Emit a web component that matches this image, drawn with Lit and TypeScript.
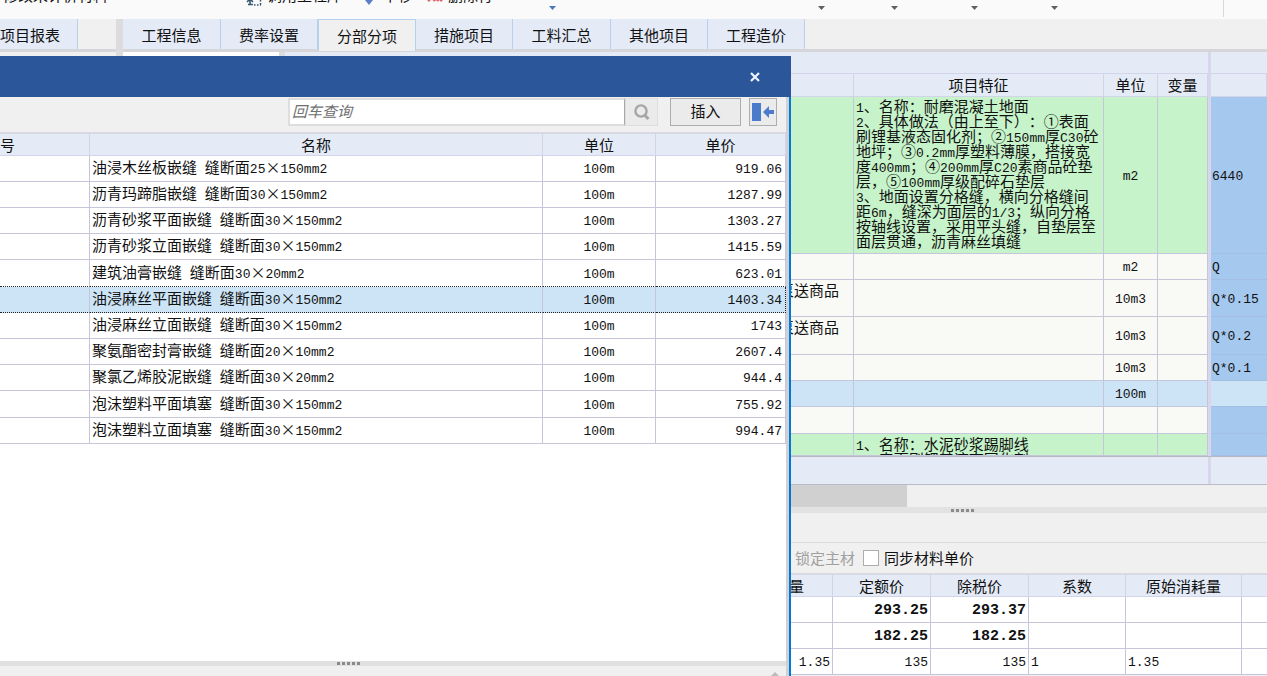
import { LitElement, html, css } from "lit";
import { customElement, property, state } from "lit/decorators.js";
import { classMap } from "lit/directives/class-map.js";

const base = css`
  * { box-sizing: border-box; }
  :host {
    font-family: "Noto Sans CJK SC", "Liberation Sans", sans-serif;
    font-size: 15px;
    line-height: 20px;
    color: #111;
    text-spacing-trim: space-all;
  }
  .latin { font-family: "Liberation Mono", monospace; font-size: 13px; }
  button, input { font: inherit; color: inherit; }
  table { border-collapse: separate; border-spacing: 0; table-layout: fixed; width: 100%; }
  th, td { padding: 0; font-weight: 400; white-space: nowrap; overflow: hidden;
    border-right: 1px solid #c6c6da; border-bottom: 1px solid #c6c6da; }
  th { background: #e4ebf7; border-color: #d2d5ea; }
  .grip { display: flex; gap: 2px; }
  .grip i { width: 3px; height: 3px; background: #8a8a8a; }
`;

/* Half-width runs are set in the monospaced face, the rest in the CJK face. */
const mixed = (s: string) =>
  s.split(/([\x20-\x7e]+)/).map((part, i) => (i % 2 ? html`<span class="latin">${part}</span>` : part));

const grip = html`<span class="grip"><i></i><i></i><i></i><i></i><i></i></span>`;

@customElement("tool-strip")
class ToolStrip extends LitElement {
  static styles = [base, css`
    :host { display: block; height: 19px; background: #fafafa; overflow: hidden; position: relative; }
    .strip { display: flex; margin-top: -13px; height: 20px; padding-left: 3px; }
    button { border: 0; background: none; padding: 0; display: flex; gap: 5px; line-height: 16px; height: 16px; white-space: nowrap; }
    .call { margin-left: 138px; }
    .down { margin-left: 20px; }
    .remove { margin-left: 14px; }
    svg { flex: none; width: 16px; height: 20px; }
    .mark { position: absolute; top: 6px; width: 7px; height: 4px; background: #606060; clip-path: polygon(0 0, 100% 0, 50% 100%); }
    .blue { background: #4a78b8; }
    .rule { position: absolute; right: 43px; top: 0; width: 1px; height: 17px; background: #d8d8d8; }
  `];
  render() {
    return html`
      <div class="strip">
        <button>修改未计价材料</button>
        <button class="call">
          <svg viewBox="0 0 16 20"><path d="M4 11v6M1 15l3-3 3 3M2 17.500h5" stroke="#34566f" stroke-width="1.600" fill="none"/><path d="M8 18h7M14.500 10v8" stroke="#34566f" stroke-width="1.500" stroke-dasharray="1.500 1.500" fill="none"/></svg>
          调用工程库
        </button>
        <button class="down">
          <svg viewBox="0 0 16 20"><path d="M7 18l4-5H3z" fill="#5b7fc6"/></svg>下移
        </button>
        <button class="remove">
          <svg viewBox="0 0 16 20"><path d="M1 14l4-4M5 10l3 4M10 14l3-4M12 11l3 3" stroke="#e0606a" stroke-width="2.600" fill="none"/></svg>删除行
        </button>
      </div>
      ${[549, 818, 891, 971, 1051].map((x, i) => html`<span class=${classMap({ mark: true, blue: i === 0 })} style="left:${x}px"></span>`)}
      <span class="rule"></span>
    `;
  }
}

@customElement("bill-grid")
class BillGrid extends LitElement {
  static styles = [base, css`
    :host { display: block; background: #e4ebf7; }
    .name { width: auto; }
    .feature { width: 250px; }
    .unit { width: 54px; }
    .variable { width: 50px; }
    .split { width: 3px; }
    .qty { width: 56px; }
    thead .group th { height: 22px; border-right: 0; }
    thead .heads th { height: 23px; line-height: 20px; }
    th.gap, td.gap { background: #d8d6ea; border: 0; }
    td { background: #f9faf6; text-align: center; vertical-align: middle; }
    .green td { background: #c6f3c9; }
    .chosen td { background: #cce4f6; }
    td.value { background: #a5c8ef; border-right: 0; border-bottom-color: #a3bfe4; text-align: left; padding-left: 1px; }
    .chosen td.value { background: #cce4f6; }
    td.title { text-align: right; padding-right: 14px; vertical-align: top; }
    td.text { text-align: left; padding-left: 2px; }
    .line { height: 15px; line-height: 15px; }
    .lines { padding-bottom: 4px; }
    .cut { height: 21px; padding-top: 2px; overflow: hidden; }
    tr.green td.gap, tr td.gap, tr.chosen td.gap { background: #d8d6ea; }
    .h156 { height: 157px; } .h26 { height: 26px; } .h27 { height: 27px; }
    .h37 { height: 37px; } .h38 { height: 38px; } .h22 { height: 22px; }
    .foot { display: flex; height: 29px; border-top: 1px solid #b8b8c0; border-bottom: 1px solid #b8bcc4; justify-content: flex-end; padding-right: 56px; }
    .foot i { width: 3px; background: #d8d6ea; }
    .scroll { height: 22px; background: #f0f0f0; }
    .thumb { height: 22px; width: 63.3%; background: #d0d0d0; }
  `];
  features = [
    "1、名称：耐磨混凝土地面",
    "2、具体做法（由上至下）：①表面",
    "刷锂基液态固化剂；②150mm厚C30砼",
    "地坪；③0.2mm厚塑料薄膜，搭接宽",
    "度400mm；④200mm厚C20素商品砼垫",
    "层，⑤100mm厚级配碎石垫层",
    "3、地面设置分格缝，横向分格缝间",
    "距6m，缝深为面层的1/3；纵向分格",
    "按轴线设置，采用平头缝，自垫层至",
    "面层贯通，沥青麻丝填缝",
  ];
  rows = [
    { h: "h156 green", text: this.features, unit: "m2", qty: "6440" },
    { h: "h26", unit: "m2", qty: "Q" },
    { h: "h37", title: "泵送商品", unit: "10m3", qty: "Q*0.15" },
    { h: "h38", title: "泵送商品", unit: "10m3", qty: "Q*0.2" },
    { h: "h26", unit: "10m3", qty: "Q*0.1" },
    { h: "h26 chosen", unit: "100m", qty: "" },
    { h: "h27", unit: "", qty: "" },
    { h: "h22 green", text: ["1、名称：水泥砂浆踢脚线", "2、表面刷锂基液态固化剂"], cut: true, unit: "", qty: "" },
  ] as { h: string; text?: string[]; title?: string; cut?: boolean; unit: string; qty: string }[];
  render() {
    return html`
      <table>
        <colgroup><col class="name"><col class="feature"><col class="unit"><col class="variable"><col class="split"><col class="qty"></colgroup>
        <thead>
          <tr class="group"><th colspan="4"></th><th class="gap"></th><th></th></tr>
          <tr class="heads"><th></th><th>项目特征</th><th>单位</th><th>变量</th><th class="gap"></th><th></th></tr>
        </thead>
        <tbody>
          ${this.rows.map((r) => html`<tr class=${r.h}>
            <td class="title">${r.title ?? ""}</td>
            <td class="text">${r.text ? html`<div class=${r.cut ? "cut" : "lines"}>${r.text.map((l) => html`<div class="line">${mixed(l)}</div>`)}</div>` : ""}</td>
            <td>${mixed(r.unit)}</td><td></td><td class="gap"></td>
            <td class="value">${mixed(r.qty)}</td>
          </tr>`)}
        </tbody>
      </table>
      <div class="foot"><i></i></div>
      <div class="scroll"><div class="thumb"></div></div>
    `;
  }
}

@customElement("material-panel")
class MaterialPanel extends LitElement {
  static styles = [base, css`
    :host { display: block; background: #f0f0f0; }
    .splitter { height: 6px; background: #e2e2e2; display: flex; justify-content: flex-end; padding: 2px 293px 0 0; }
    .blank { height: 30px; border-bottom: 1px solid #dcdcdc; }
    .options { height: 32px; display: flex; align-items: center; justify-content: flex-end; gap: 8px; padding-right: 293px; border-bottom: 2px solid #d8d9e2; }
    label { display: flex; align-items: center; gap: 5px; }
    .off { color: #a0a0a0; }
    input { appearance: none; width: 16px; height: 16px; margin: 0; border: 1px solid #adadad; background: #fff; }
    .used { width: auto; }
    .price { width: 98px; }
    .ratio { width: 97px; }
    .origin { width: 116px; }
    .rest { width: 25px; }
    th { height: 22px; line-height: 20px; }
    th.lead { text-align: right; padding-right: 28px; }
    th:last-child, td:last-child { border-right: 0; }
    td { height: 26px; background: #fff; padding: 0 2px; }
    .num { text-align: right; }
    .strong .latin { font-weight: 700; font-size: 15px; }
  `];
  render() {
    const rows = [
      ["", "293.25", "293.37", "", ""],
      ["", "182.25", "182.25", "", ""],
      ["1.35", "135", "135", "1", "1.35"],
    ];
    return html`
      <div class="splitter">${grip}</div>
      <div class="blank"></div>
      <div class="options">
        <label class="off"><input type="checkbox" disabled>锁定主材</label>
        <label><input type="checkbox">同步材料单价</label>
      </div>
      <table>
        <colgroup><col class="used"><col class="price"><col class="price"><col class="ratio"><col class="origin"><col class="rest"></colgroup>
        <thead><tr><th class="lead">消耗量</th><th>定额价</th><th>除税价</th><th>系数</th><th>原始消耗量</th><th></th></tr></thead>
        <tbody>
          ${rows.map((r, i) => html`<tr class=${classMap({ strong: i < 2 })}>
            ${r.map((c, j) => html`<td class=${classMap({ num: j < 3 })}>${mixed(c)}</td>`)}<td></td>
          </tr>`)}
        </tbody>
      </table>
    `;
  }
}

@customElement("quota-dialog")
class QuotaDialog extends LitElement {
  static styles = [base, css`
    :host { display: flex; flex-direction: column; background: #f0f0f0; }
    .bar { flex: none; height: 41px; background: #2b579a; display: flex; align-items: center; justify-content: flex-end; padding-right: 29px; }
    .bar button { border: 0; background: none; padding: 0; width: 14px; height: 14px; display: flex; align-items: center; justify-content: center; }
    .body { flex: 1; min-height: 0; display: flex; flex-direction: column; border-right: 2px solid #0078d7; }
    .inner { flex: 1; min-height: 0; display: flex; flex-direction: column; border-right: 3px solid #cfd1d6; }
    .tools { height: 37px; flex: none; display: flex; padding: 1px 9px 0 288px; border-bottom: 2px solid #d8d9e2; }
    .tools input { flex: 1; min-width: 0; height: 28px; border: 2px solid #dedede; border-right: 1px solid #a8a8a8; padding: 0 2px 4px; background: #fff; outline: 0; }
    .tools input::placeholder { font-style: italic; color: #707070; opacity: 1; }
    .tools button { height: 28px; border: 1px solid #adadad; background: #ebebeb; padding: 0 0 2px; display: flex; align-items: center; justify-content: center; }
    .tools .find { width: 33px; border-color: #dedede; padding: 0; }
    .tools .insert { width: 71px; margin-left: 12px; }
    .tools .dock { width: 28px; margin-left: 8px; padding: 0; }
    .list { flex: 1; min-height: 0; background: #fff; }
    .code { width: 90px; } .label { width: auto; } .unit { width: 113px; } .cost { width: 130px; }
    th { height: 22px; line-height: 20px; }
    th.first { text-align: left; }
    td { height: 26px; background: #fff; }
    tr:nth-child(5n) td { height: 27px; }
    td.left { padding-left: 2px; }
    td.mid { text-align: center; }
    td.right { text-align: right; padding-right: 3px; }
    .chosen td { background: #cce4f6; border-bottom: 1px dotted #222; }
    .before td { border-bottom: 1px dotted #222; }
    .chosen td.right { border-right: 1px dotted #222; }
    .splitter { flex: none; height: 5px; background: #e0e0e0; display: flex; padding: 1px 0 0 337px; }
    .tail { flex: none; height: 10px; display: flex; justify-content: flex-end; align-items: flex-end; padding-right: 7px; }
  `];
  @state() chosen = 5;
  items = [
    ["油浸木丝板嵌缝 缝断面25×150mm2", "919.06"],
    ["沥青玛蹄脂嵌缝 缝断面30×150mm2", "1287.99"],
    ["沥青砂浆平面嵌缝 缝断面30×150mm2", "1303.27"],
    ["沥青砂浆立面嵌缝 缝断面30×150mm2", "1415.59"],
    ["建筑油膏嵌缝 缝断面30×20mm2", "623.01"],
    ["油浸麻丝平面嵌缝 缝断面30×150mm2", "1403.34"],
    ["油浸麻丝立面嵌缝 缝断面30×150mm2", "1743"],
    ["聚氨酯密封膏嵌缝 缝断面20×10mm2", "2607.4"],
    ["聚氯乙烯胶泥嵌缝 缝断面30×20mm2", "944.4"],
    ["泡沫塑料平面填塞 缝断面30×150mm2", "755.92"],
    ["泡沫塑料立面填塞 缝断面30×150mm2", "994.47"],
  ];
  render() {
    return html`
      <div class="bar">
        <button aria-label="关闭"><svg width="12" height="10" viewBox="0 0 12 10"><path d="M2 1l8 8M10 1L2 9" stroke="#eef3fa" stroke-width="2.2"/></svg></button>
      </div>
      <div class="body"><div class="inner">
        <div class="tools">
          <input type="text" placeholder="回车查询" aria-label="回车查询">
          <button class="find" aria-label="查询"><svg width="18" height="18" viewBox="0 0 18 18"><circle cx="8" cy="8" r="5.6" fill="none" stroke="#a6a6a6" stroke-width="2.4"/><path d="M11.5 12l4 4" stroke="#a6a6a6" stroke-width="3"/></svg></button>
          <button class="insert">插入</button>
          <button class="dock" aria-label="停靠"><svg width="22" height="18" viewBox="0 0 22 18"><path d="M0 0h9v18H0zM11 9l6-6v4h5v4h-5v4z" fill="#4a7ccb"/></svg></button>
        </div>
        <div class="list">
          <table>
            <colgroup><col class="code"><col class="label"><col class="unit"><col class="cost"></colgroup>
            <thead><tr><th class="first">号</th><th>名称</th><th>单位</th><th>单价</th></tr></thead>
            <tbody>
              ${this.items.map(([name, cost], i) => html`<tr class=${classMap({ chosen: i === this.chosen, before: i === this.chosen - 1 })} @click=${() => (this.chosen = i)}>
                <td></td><td class="left">${mixed(name)}</td><td class="mid">${mixed("100m")}</td><td class="right">${mixed(cost)}</td>
              </tr>`)}
            </tbody>
          </table>
        </div>
        <div class="splitter">${grip}</div>
        <div class="tail"><svg width="8" height="4" viewBox="0 0 8 4"><path d="M0 4l4-4 4 4z" fill="#bcbcbc"/></svg></div>
      </div></div>
    `;
  }
}

@customElement("app-root")
class AppRoot extends LitElement {
  static styles = [base, css`
    :host { display: flex; flex-direction: column; height: 100vh; overflow: hidden; position: relative; background: #f0f0f0; }
    tool-strip { flex: none; }
    .work { flex: 1; min-height: 0; display: flex; }
    .side { flex: none; width: 117px; border-right: 1px solid #dcdcdc; }
    .split { flex: none; width: 6px; background: #dcdcdc; }
    .main { flex: 1; min-width: 0; }
    .tabs { display: flex; height: 33px; border-bottom: 3px solid #d6d6da; }
    .tab { flex: none; width: 97px; height: 30px; padding: 2px 0 0; border: 0; border-right: 1px solid #b5d1ec; background: #e4ebf7; line-height: 20px; }
    .tab.wide { width: 98px; }
    .tab.active { height: 32px; padding: 0; background: #f0f0f0; border-left: 1px solid #b5d1ec; border-top: 1px solid #b5d1ec; }
    .side .tab { width: 78px; text-align: left; }
    .panes { display: flex; }
    .tree { flex: none; width: 156px; background: #fff; }
    .bar { flex: none; width: 6px; background: #dcdcdc; }
    bill-grid { flex: 1; min-width: 0; }
    quota-dialog { position: absolute; left: 0; top: 56px; bottom: 0; width: 791px; }
  `];
  @property() current = "分部分项";
  tabs = ["工程信息", "费率设置", "分部分项", "措施项目", "工料汇总", "其他项目", "工程造价"];
  render() {
    return html`
      <tool-strip></tool-strip>
      <div class="work">
        <div class="side"><div class="tabs"><button class="tab">项目报表</button></div></div>
        <div class="split"></div>
        <div class="main">
          <div class="tabs">
            ${this.tabs.map((t, i) => html`<button class=${classMap({ tab: true, wide: i % 2 === 0 && i < 6, active: t === this.current })} @click=${() => (this.current = t)}>${t}</button>`)}
          </div>
          <div class="panes"><div class="tree"></div><div class="bar"></div><bill-grid></bill-grid></div>
          <material-panel></material-panel>
        </div>
      </div>
      <quota-dialog></quota-dialog>
    `;
  }
}
